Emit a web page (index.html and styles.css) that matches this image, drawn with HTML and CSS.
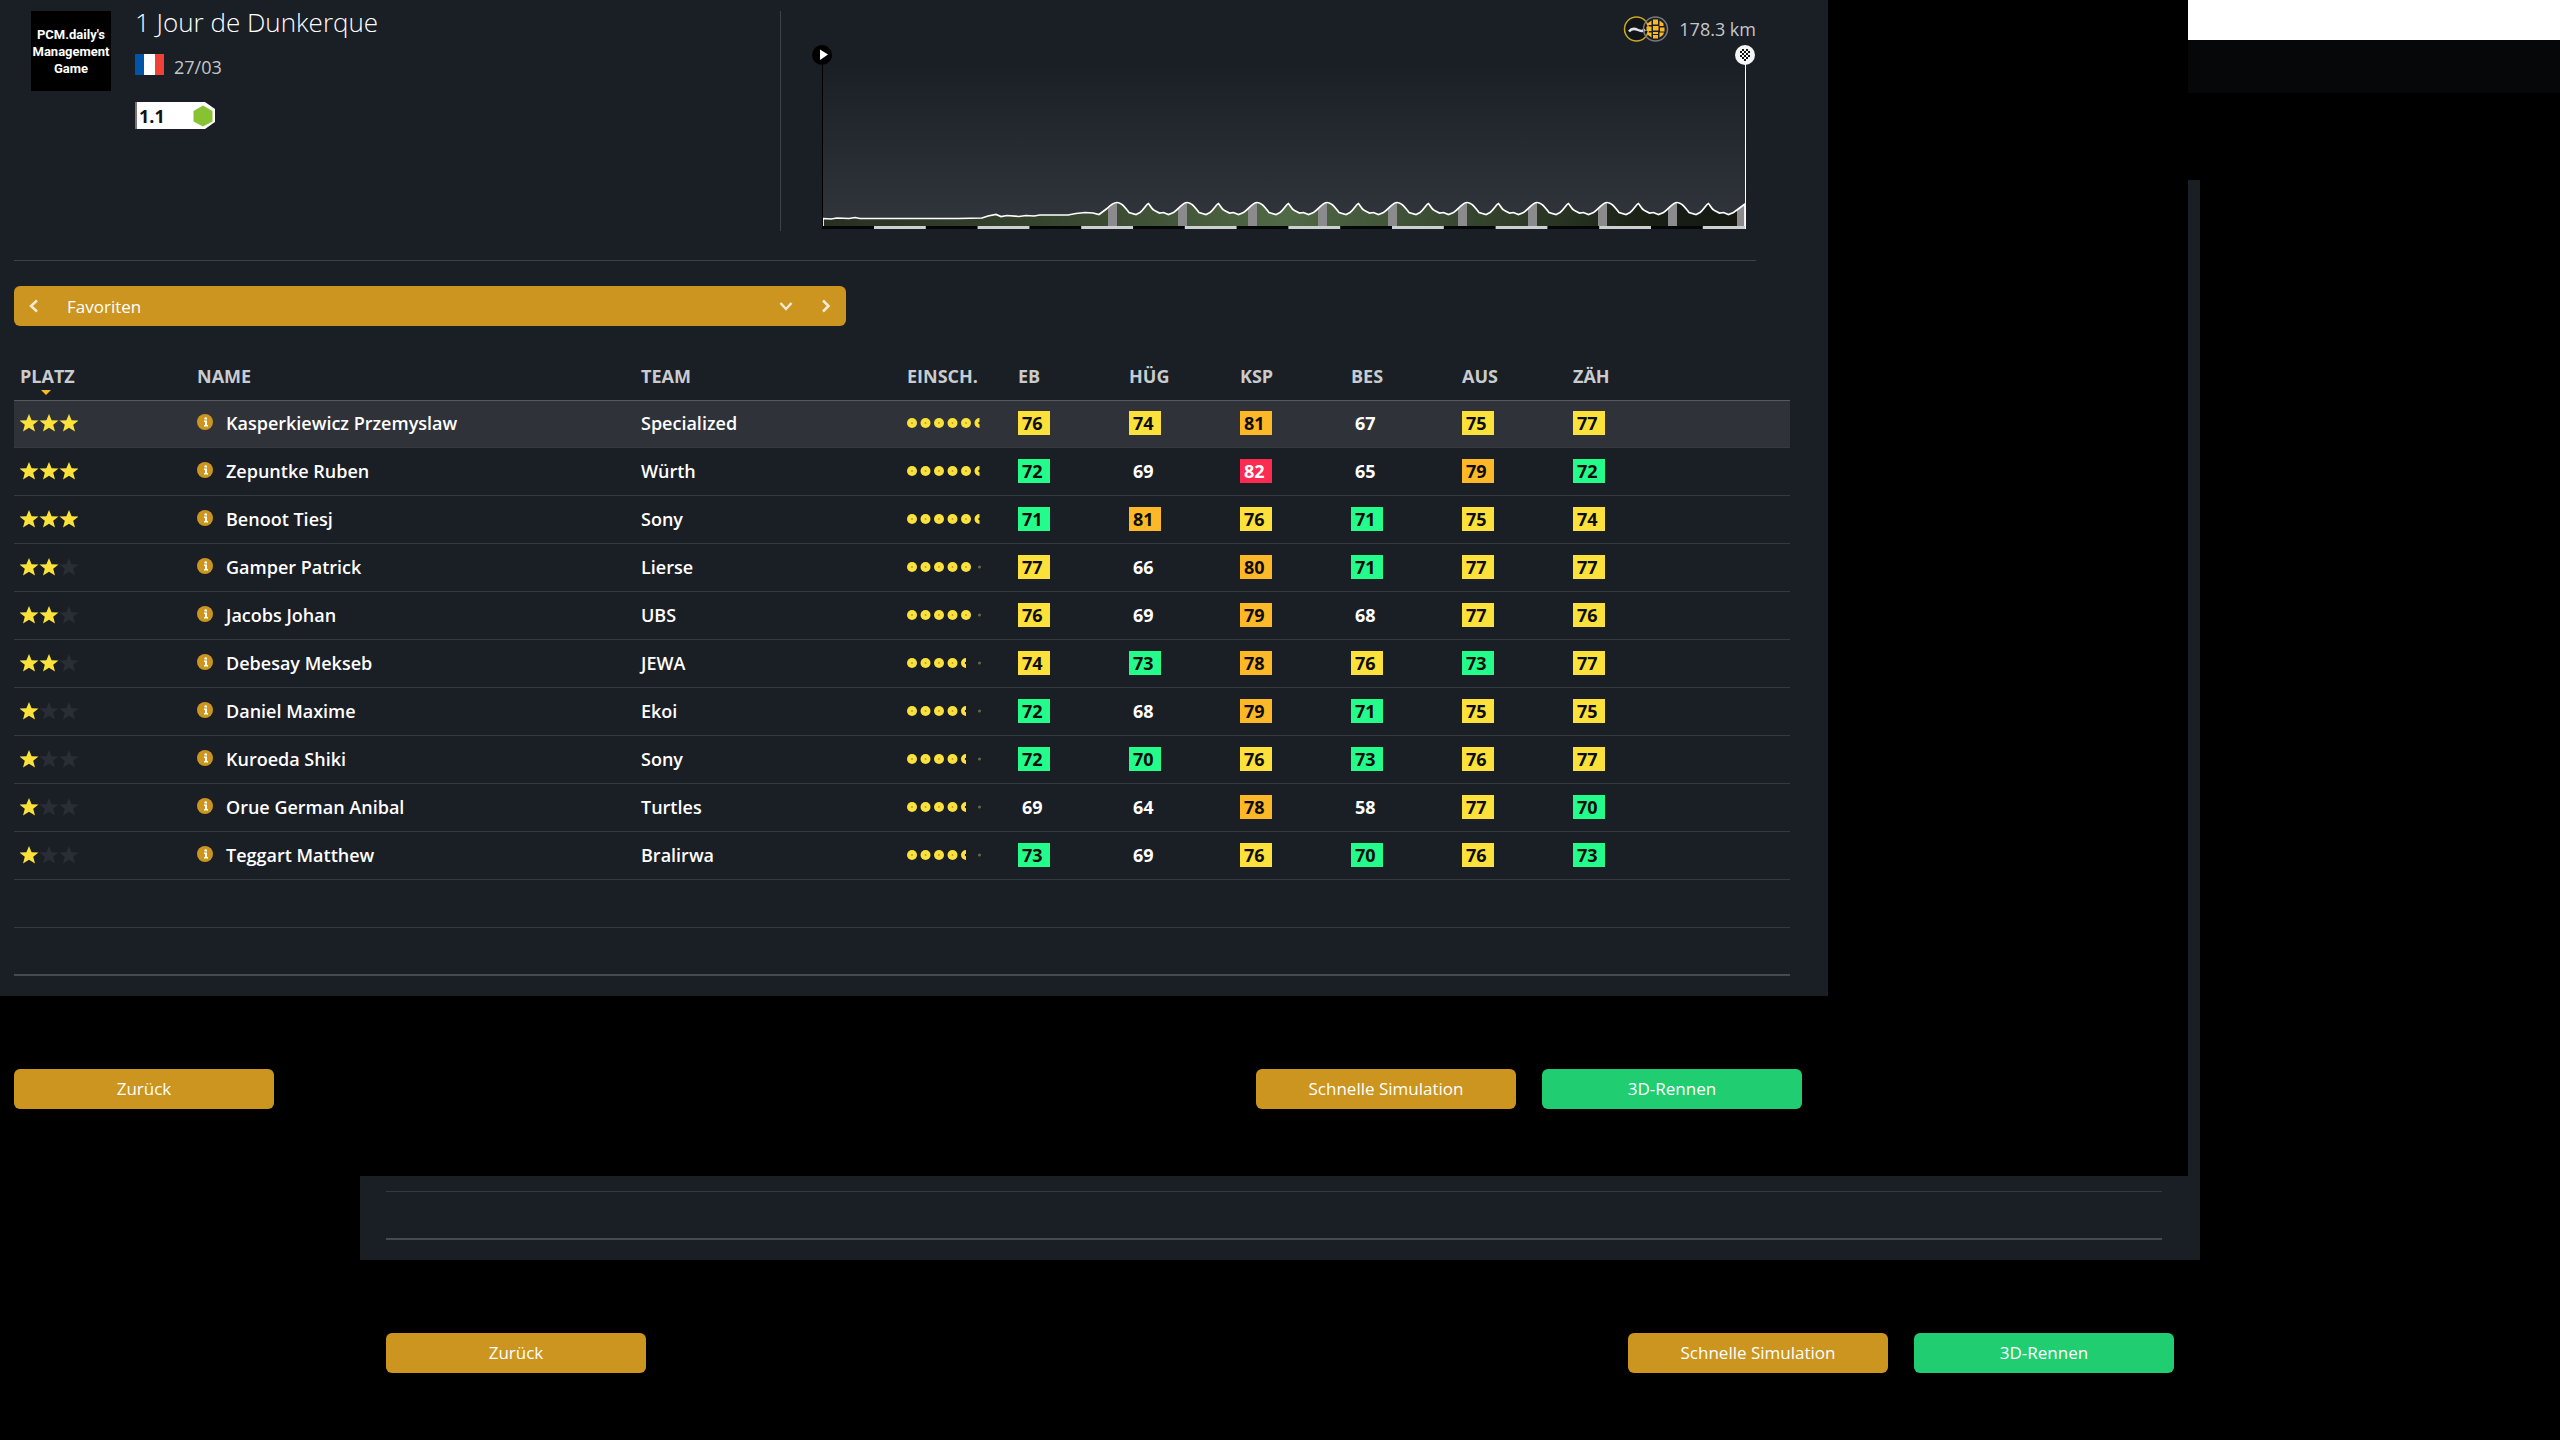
FILE: index.html
```html
<!DOCTYPE html>
<html lang="de">
<head>
<meta charset="utf-8">
<title>1 Jour de Dunkerque</title>
<link rel="stylesheet" href="styles.css">
</head>
<body>
<svg class="sprite" aria-hidden="true">
  <defs>
    <path id="star" d="M9 0l2.600 6.200 6.900.4-5.300 4.200 1.800 6.700L9 13.800 3 17.500l1.800-6.700L-.500 6.600l6.900-.4z"/>
    <g id="dot"><circle cx="5" cy="5" r="5" fill="#fce13a"/><circle cx="5" cy="5" r="1" fill="#b9a232"/></g>
    <path id="half" d="M5 0a5 5 0 0 0 0 10V6.200A1.200 1.200 0 0 1 5 3.800z" fill="#fce13a"/>
    <circle id="none" cx="5" cy="5" r="1.500" fill="#6b6642"/>
  </defs>
  <symbol id="stars3" viewBox="0 0 58 18"><g fill="#fce13a"><use href="#star"/><use href="#star" x="20"/><use href="#star" x="40"/></g></symbol>
  <symbol id="stars2" viewBox="0 0 58 18"><g fill="#fce13a"><use href="#star"/><use href="#star" x="20"/></g><use href="#star" x="40" fill="#292e36"/></symbol>
  <symbol id="stars1" viewBox="0 0 58 18"><use href="#star" fill="#fce13a"/><g fill="#292e36"><use href="#star" x="20"/><use href="#star" x="40"/></g></symbol>
  <symbol id="form55" viewBox="0 0 78 10"><use href="#dot"/><use href="#dot" x="13.500"/><use href="#dot" x="27"/><use href="#dot" x="40.500"/><use href="#dot" x="54"/><use href="#half" x="67.500"/></symbol>
  <symbol id="form50" viewBox="0 0 78 10"><use href="#dot"/><use href="#dot" x="13.500"/><use href="#dot" x="27"/><use href="#dot" x="40.500"/><use href="#dot" x="54"/><use href="#none" x="67.500"/></symbol>
  <symbol id="form45" viewBox="0 0 78 10"><use href="#dot"/><use href="#dot" x="13.500"/><use href="#dot" x="27"/><use href="#dot" x="40.500"/><use href="#half" x="54"/><use href="#none" x="67.500"/></symbol>
  <symbol id="info" viewBox="0 0 16 16"><circle cx="8" cy="8" r="8" fill="#cc9520"/><path d="M7.500 3.500h2.500v2h-2.500zM7 6.500h3v4.500h1v1.500H7V11h1V8H7z" fill="#fff"/></symbol>
</svg>

<div class="window back">
  <div class="titlebar"></div>
  <div class="topbar"></div>
  <div class="panel">
    <div class="line"></div>
    <div class="line strong"></div>
  </div>
  <footer class="actions">
    <button class="btn" type="button">Zurück</button>
    <button class="btn push" type="button">Schnelle Simulation</button>
    <button class="btn go" type="button">3D-Rennen</button>
  </footer>
</div>

<main class="window front">
  <section class="panel">
    <header class="race">
      <div class="logo">PCM.daily's Management Game</div>
      <div class="facts">
        <h1>1 Jour de Dunkerque</h1>
        <div class="date">
          <svg class="flag" viewBox="0 0 29 21" role="img" aria-label="Frankreich"><path d="M0 0h9v21H0z" fill="#0055a8"/><path d="M9 0h11v21H9z" fill="#fff"/><path d="M20 0h9v21h-9z" fill="#ef4136"/></svg>
          <span>27/03</span>
        </div>
        <div class="category">
          <span>1.1</span>
          <svg viewBox="0 0 20 22" aria-hidden="true"><path d="M10 0.500l9.500 5.500v10.500L10 21.500.500 16.500V6z" fill="#86c232"/></svg>
        </div>
      </div>
      <div class="stage">
        <div class="distance">
          <svg class="terrain" viewBox="0 0 46 28" aria-hidden="true">
            <circle cx="13.500" cy="14" r="12" fill="#11151a" stroke="#c9a91d" stroke-width="1.500"/>
            <path d="M6 16.500c3-4 6-3 9-1.500s5 1.500 7-.500" fill="none" stroke="#dfe1e4" stroke-width="2.500"/>
            <circle cx="32.500" cy="14" r="12" fill="none" stroke="#77797d" stroke-width="1.500"/>
            <g fill="#fdb827"><path d="M30 4.500h5v5h-5zM30 17h5v2h-5zM24.500 8.500l4-3v4.500h-5zM36.500 5.500l4 3v2.500h-4zM23.500 11.500h5v4.500h-5zM30 11h5.500v4.500H30zM37 12.500h4.500v4H37zM24 17.500h4.500v5l-4-3zM30 20h5v3.500h-5zM36.500 17.500h4.500l-1 2.500-3.500 2.500z"/></g>
          </svg>
          <span>178.3 km</span>
        </div>
        <svg class="profile" viewBox="812 44 944 186" role="img" aria-label="Streckenprofil">
          <defs>
            <linearGradient id="sky" x1="0" y1="0" x2="0" y2="1"><stop offset="0" stop-color="#1a1e25"/><stop offset="1" stop-color="#31353c"/></linearGradient>
            <linearGradient id="land"><stop offset="0" stop-color="#272f22"/><stop offset=".3" stop-color="#3a4a31"/><stop offset=".5" stop-color="#506946"/><stop offset=".75" stop-color="#303d29"/><stop offset=".9" stop-color="#181f15"/><stop offset="1" stop-color="#141811"/></linearGradient>
            <path id="slope" d="M823 218.500l8 .5 6-1 12 .500 6-1 5 1h98l24-.500 6-2 8-1.500 5 2 6-1 12 1 7-1 8 .500 6-1 28 0 8-1.500 9-1 8 .5 6 1.500 8-6c3-3 6-6 10-6
              c5 0 8 5 12 10l7 2 4-2c4-3 6-8 8.500-9 2 2 3 6 6 7l5 2.500 4-.500 5 2 5-2c5-3 9-10 13.500-10
              c5 0 8 5 12 10l7 2 4-2c4-3 6-8 8.500-9 2 2 3 6 6 7l5 2.500 4-.500 5 2 5-2c5-3 9-10 13.500-10
              c5 0 8 5 12 10l7 2 4-2c4-3 6-8 8.500-9 2 2 3 6 6 7l5 2.500 4-.500 5 2 5-2c5-3 9-10 13.500-10
              c5 0 8 5 12 10l7 2 4-2c4-3 6-8 8.500-9 2 2 3 6 6 7l5 2.500 4-.500 5 2 5-2c5-3 9-10 13.500-10
              c5 0 8 5 12 10l7 2 4-2c4-3 6-8 8.500-9 2 2 3 6 6 7l5 2.500 4-.500 5 2 5-2c5-3 9-10 13.500-10
              c5 0 8 5 12 10l7 2 4-2c4-3 6-8 8.500-9 2 2 3 6 6 7l5 2.500 4-.500 5 2 5-2c5-3 9-10 13.500-10
              c5 0 8 5 12 10l7 2 4-2c4-3 6-8 8.500-9 2 2 3 6 6 7l5 2.500 4-.500 5 2 5-2c5-3 9-10 13.500-10
              c5 0 8 5 12 10l7 2 4-2c4-3 6-8 8.500-9 2 2 3 6 6 7l5 2.500 4-.500 5 2 5-2c5-3 9-10 13.500-10
              c5 0 8 5 12 10l7 2 4-2c4-3 6-8 8.500-9 2 2 3 6 6 7l5 2.500 4-.500 5 2 5-2L1745 204V228H823z"/>
            <clipPath id="under"><use href="#slope"/></clipPath>
          </defs>
          <path d="M823 64h922v162H823z" fill="url(#sky)"/>
          <g clip-path="url(#under)">
            <path d="M823 200h922v26H823z" fill="url(#land)"/>
            <path d="M1112.500 200v26M1182.500 200v26M1252.500 200v26M1322.500 200v26M1392.500 200v26M1462.500 200v26M1532.500 200v26M1602.500 200v26M1672.500 200v26M1741.500 200v26" stroke="#8b8b8e" stroke-width="9"/>
          </g>
          <use href="#slope" fill="none" stroke="#fff" stroke-width="1.700"/>
          <path d="M822 227.500h923" stroke="#050607" stroke-width="3"/>
          <path d="M874 227.500h871" stroke="#ccd0d0" stroke-width="3" stroke-dasharray="51.800"/>
          <path d="M822.500 60v169" stroke="#000"/>
          <path d="M1745.500 60v169" stroke="#fff"/>
          <circle cx="822" cy="55" r="10"/>
          <path d="M820 49.500l8 5-8 5.500z" fill="#fff"/>
          <circle cx="1745" cy="55" r="10" fill="#f4f5f5"/>
          <path d="M1742 49h2v2h-2zM1746 49h2v2h-2zM1740 51h2v2h-2zM1744 51h2v2h-2zM1748 51h2v2h-2zM1742 53h2v2h-2zM1746 53h2v2h-2zM1740 55h2v2h-2zM1744 55h2v2h-2zM1748 55h2v2h-2zM1742 57h2v2h-2zM1746 57h2v2h-2zM1744 59h2v2h-2z" fill="#111"/>
        </svg>
      </div>
    </header>

    <div class="picker">
      <button type="button" aria-label="Vorherige Ansicht"><svg viewBox="0 0 14 14"><path d="M10 1.500L4 7l6 5.500"/></svg></button>
      <select aria-label="Ansicht"><option>Favoriten</option></select>
      <svg class="caret" viewBox="0 0 14 14" aria-hidden="true"><path d="M1.500 4L7 10l5.500-6"/></svg>
      <button type="button" aria-label="Nächste Ansicht"><svg viewBox="0 0 14 14"><path d="M4 1.500L9.500 7 4 12.500"/></svg></button>
    </div>

    <table>
      <colgroup><col class="c-rank"><col class="c-name"><col class="c-team"><col class="c-form"><col class="c-val"><col class="c-val"><col class="c-val"><col class="c-val"><col class="c-val"><col></colgroup>
      <thead><tr><th><span class="sorted">PLATZ</span></th><th>NAME</th><th>TEAM</th><th>EINSCH.</th><th>EB</th><th>HÜG</th><th>KSP</th><th>BES</th><th>AUS</th><th>ZÄH</th></tr></thead>
      <tbody>
        <tr class="selected"><td><svg class="stars"><use href="#stars3"/></svg></td><td><svg class="info"><use href="#info"/></svg>Kasperkiewicz Przemyslaw</td><td>Specialized</td><td><svg class="form"><use href="#form55"/></svg></td><td><b class="y">76</b></td><td><b class="y">74</b></td><td><b class="o">81</b></td><td><b>67</b></td><td><b class="y">75</b></td><td><b class="y">77</b></td></tr>
        <tr><td><svg class="stars"><use href="#stars3"/></svg></td><td><svg class="info"><use href="#info"/></svg>Zepuntke Ruben</td><td>Würth</td><td><svg class="form"><use href="#form55"/></svg></td><td><b class="g">72</b></td><td><b>69</b></td><td><b class="r">82</b></td><td><b>65</b></td><td><b class="o">79</b></td><td><b class="g">72</b></td></tr>
        <tr><td><svg class="stars"><use href="#stars3"/></svg></td><td><svg class="info"><use href="#info"/></svg>Benoot Tiesj</td><td>Sony</td><td><svg class="form"><use href="#form55"/></svg></td><td><b class="g">71</b></td><td><b class="o">81</b></td><td><b class="y">76</b></td><td><b class="g">71</b></td><td><b class="y">75</b></td><td><b class="y">74</b></td></tr>
        <tr><td><svg class="stars"><use href="#stars2"/></svg></td><td><svg class="info"><use href="#info"/></svg>Gamper Patrick</td><td>Lierse</td><td><svg class="form"><use href="#form50"/></svg></td><td><b class="y">77</b></td><td><b>66</b></td><td><b class="o">80</b></td><td><b class="g">71</b></td><td><b class="y">77</b></td><td><b class="y">77</b></td></tr>
        <tr><td><svg class="stars"><use href="#stars2"/></svg></td><td><svg class="info"><use href="#info"/></svg>Jacobs Johan</td><td>UBS</td><td><svg class="form"><use href="#form50"/></svg></td><td><b class="y">76</b></td><td><b>69</b></td><td><b class="o">79</b></td><td><b>68</b></td><td><b class="y">77</b></td><td><b class="y">76</b></td></tr>
        <tr><td><svg class="stars"><use href="#stars2"/></svg></td><td><svg class="info"><use href="#info"/></svg>Debesay Mekseb</td><td>JEWA</td><td><svg class="form"><use href="#form45"/></svg></td><td><b class="y">74</b></td><td><b class="g">73</b></td><td><b class="o">78</b></td><td><b class="y">76</b></td><td><b class="g">73</b></td><td><b class="y">77</b></td></tr>
        <tr><td><svg class="stars"><use href="#stars1"/></svg></td><td><svg class="info"><use href="#info"/></svg>Daniel Maxime</td><td>Ekoi</td><td><svg class="form"><use href="#form45"/></svg></td><td><b class="g">72</b></td><td><b>68</b></td><td><b class="o">79</b></td><td><b class="g">71</b></td><td><b class="y">75</b></td><td><b class="y">75</b></td></tr>
        <tr><td><svg class="stars"><use href="#stars1"/></svg></td><td><svg class="info"><use href="#info"/></svg>Kuroeda Shiki</td><td>Sony</td><td><svg class="form"><use href="#form45"/></svg></td><td><b class="g">72</b></td><td><b class="g">70</b></td><td><b class="y">76</b></td><td><b class="g">73</b></td><td><b class="y">76</b></td><td><b class="y">77</b></td></tr>
        <tr><td><svg class="stars"><use href="#stars1"/></svg></td><td><svg class="info"><use href="#info"/></svg>Orue German Anibal</td><td>Turtles</td><td><svg class="form"><use href="#form45"/></svg></td><td><b>69</b></td><td><b>64</b></td><td><b class="o">78</b></td><td><b>58</b></td><td><b class="y">77</b></td><td><b class="g">70</b></td></tr>
        <tr><td><svg class="stars"><use href="#stars1"/></svg></td><td><svg class="info"><use href="#info"/></svg>Teggart Matthew</td><td>Bralirwa</td><td><svg class="form"><use href="#form45"/></svg></td><td><b class="g">73</b></td><td><b>69</b></td><td><b class="y">76</b></td><td><b class="g">70</b></td><td><b class="y">76</b></td><td><b class="g">73</b></td></tr>
        <tr><td colspan="10"></td></tr>
        <tr class="last"><td colspan="10"></td></tr>
      </tbody>
    </table>
  </section>
  <footer class="actions">
    <button class="btn" type="button">Zurück</button>
    <button class="btn push" type="button">Schnelle Simulation</button>
    <button class="btn go" type="button">3D-Rennen</button>
  </footer>
</main>
</body>
</html>
```
FILE: styles.css
```css
* { box-sizing: border-box; }

body {
  margin: 0;
  min-height: 100vh;
  background: #000;
  color: #fff;
  font-family: "Open Sans", "Noto Sans", sans-serif;
  font-size: 18px;
}

.sprite { position: absolute; width: 0; height: 0; }

/* Overlapping windows */
.window { position: absolute; top: 0; background: #000; display: flex; flex-direction: column; }
.back { left: 0; width: 100%; height: 100vh; }
.front { left: 0; width: calc(100% - 372px); }
.panel { background: #1a1e25; }

.titlebar { height: 40px; background: #fff; }
.topbar { height: 53px; background: #060709; margin-bottom: 87px; }
.back .panel {
  flex: 1;
  margin: 0 360px;
  padding: 0 38px 20px 26px;
  display: flex;
  flex-direction: column;
  justify-content: flex-end;
  gap: 46px;
}
.line { height: 1px; background: #353941; }
.line.strong { height: 2px; background: #454950; }

.actions { display: flex; gap: 26px; height: 180px; padding: 73px 26px 0; }
.back .actions { margin: 0 360px; }
.front .actions { margin-right: 360px; padding-left: 14px; }
.btn {
  width: 260px;
  height: 40px;
  border: 0;
  border-radius: 6px;
  padding: 0;
  background: #cb9520;
  color: #fff;
  font: 400 17px/40px "Open Sans", sans-serif;
}
.push { margin-left: auto; }
.go { background: #21cd71; }

/* Race header */
.front .panel { margin-right: 360px; padding: 8px 38px 20px 14px; }
.race {
  display: flex;
  height: 253px;
  margin-right: 34px;
  padding-left: 17px;
  border-bottom: 1px solid #3d4148;
}
.logo {
  width: 80px;
  height: 80px;
  margin-top: 3px;
  padding: 15px 0;
  background: #000;
  font: 700 13px/17px Roboto, sans-serif;
  text-align: center;
}
.facts { flex: 1; padding-left: 24px; }
h1 { margin: 0; font-size: 26px; line-height: 28px; font-weight: 300; }
.date { display: flex; gap: 10px; margin-top: 18px; line-height: 26px; color: #c4c7ca; }
.flag { width: 29px; height: 21px; }
.category {
  display: flex;
  align-items: center;
  justify-content: space-between;
  width: 80px;
  height: 27px;
  margin-top: 22px;
  padding: 0 2px;
  border-left: 2px solid #777;
  background: #fff;
  color: #111;
  font-weight: 700;
  line-height: 24px;
  clip-path: polygon(0 0, 70px 0, 80px 7px, 80px 20px, 70px 27px, 0 27px);
}
.category svg { width: 20px; height: 22px; }
.stage { width: 976px; height: 220px; margin-top: 3px; padding-left: 31px; border-left: 1px solid #3d4148; }
.distance {
  display: flex;
  justify-content: flex-end;
  align-items: center;
  gap: 10px;
  height: 33px;
  padding-top: 2px;
  color: #c4c7ca;
}
.terrain { width: 46px; height: 28px; }
.profile { display: block; width: 100%; }

/* View picker */
.picker {
  display: flex;
  align-items: center;
  width: 832px;
  max-width: 100%;
  height: 40px;
  margin-top: 25px;
  border-radius: 6px;
  background: #cb9520;
}
.picker svg { display: block; width: 14px; height: 14px; fill: none; stroke: #f6ead2; stroke-width: 2.5; }
.picker button { width: 40px; height: 40px; border: 0; padding: 0 13px; background: none; }
.picker select {
  flex: 1;
  height: 40px;
  border: 0;
  padding: 0 13px;
  background: none;
  color: #fff;
  font: 400 17px "Open Sans", sans-serif;
  appearance: none;
}
.caret { margin-right: 13px; }

/* Favourites */
table { width: 100%; margin-top: 26px; border-collapse: separate; border-spacing: 0; table-layout: fixed; }
.c-rank { width: 177px; }
.c-name { width: 444px; }
.c-team { width: 266px; }
.c-form { width: 111px; }
.c-val { width: 111px; }
th {
  height: 49px;
  padding: 0 0 0 6px;
  border-bottom: 1px solid #555a61;
  color: #c9ccce;
  font-weight: 700;
  line-height: 24px;
  text-align: left;
}
.sorted { position: relative; }
.sorted::after {
  content: "";
  position: absolute;
  left: 21px;
  top: 26px;
  border: 5px solid transparent;
  border-top-color: #fdb827;
  border-bottom: 0;
}
td {
  height: 48px;
  padding: 0 0 2px 6px;
  border-bottom: 1px solid #353941;
  font-weight: 600;
  line-height: 24px;
  white-space: nowrap;
}
.selected td { height: 47px; background: #2f3339; }
.last td { border-bottom: 2px solid #454950; }
.stars { display: block; width: 58px; height: 18px; }
.info { width: 16px; height: 16px; margin-right: 13px; vertical-align: baseline; }
.form { display: block; width: 78px; height: 10px; }
td b {
  display: block;
  width: 32px;
  height: 24px;
  padding-left: 4px;
  font-weight: 700;
  line-height: 24px;
}
.y { background: #fce13a; color: #0d0d0d; }
.o { background: #fdb827; color: #0d0d0d; }
.g { background: #23fc8b; color: #0d0d0d; }
.r { background: #fd2a52; }
```
